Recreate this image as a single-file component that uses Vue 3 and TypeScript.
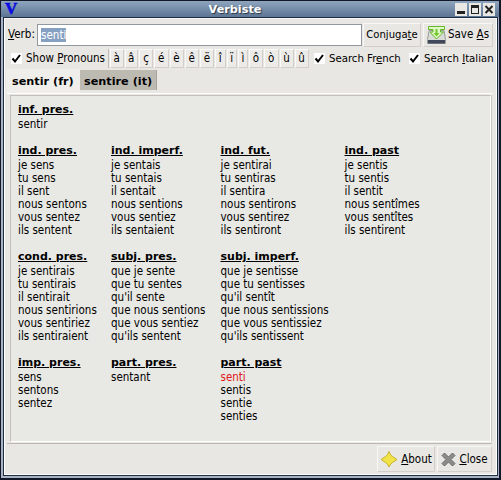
<script setup lang="ts">
interface Tense { name: string; forms: string[] }
interface Row { tenses: Tense[] }

const accents: { c: string; w: number }[] = [
  { c: 'à', w: 13.5 }, { c: 'â', w: 13.5 }, { c: 'ç', w: 14 }, { c: 'é', w: 14.5 }, { c: 'è', w: 14 },
  { c: 'ê', w: 14.5 }, { c: 'ë', w: 14 }, { c: 'î', w: 10.5 }, { c: 'ï', w: 10.5 }, { c: 'ì', w: 10 },
  { c: 'ô', w: 14 }, { c: 'ò', w: 14.5 }, { c: 'ù', w: 14 }, { c: 'û', w: 14 },
]

const rows: Row[] = [
  { tenses: [{ name: 'inf. pres.', forms: ['sentir'] }] },
  { tenses: [
    { name: 'ind. pres.', forms: ['je sens', 'tu sens', 'il sent', 'nous sentons', 'vous sentez', 'ils sentent'] },
    { name: 'ind. imperf.', forms: ['je sentais', 'tu sentais', 'il sentait', 'nous sentions', 'vous sentiez', 'ils sentaient'] },
    { name: 'ind. fut.', forms: ['je sentirai', 'tu sentiras', 'il sentira', 'nous sentirons', 'vous sentirez', 'ils sentiront'] },
    { name: 'ind. past', forms: ['je sentis', 'tu sentis', 'il sentit', 'nous sentîmes', 'vous sentîtes', 'ils sentirent'] },
  ] },
  { tenses: [
    { name: 'cond. pres.', forms: ['je sentirais', 'tu sentirais', 'il sentirait', 'nous sentirions', 'vous sentiriez', 'ils sentiraient'] },
    { name: 'subj. pres.', forms: ['que je sente', 'que tu sentes', "qu'il sente", 'que nous sentions', 'que vous sentiez', "qu'ils sentent"] },
    { name: 'subj. imperf.', forms: ['que je sentisse', 'que tu sentisses', "qu'il sentît", 'que nous sentissions', 'que vous sentissiez', "qu'ils sentissent"] },
  ] },
  { tenses: [
    { name: 'imp. pres.', forms: ['sens', 'sentons', 'sentez'] },
    { name: 'part. pres.', forms: ['sentant'] },
    { name: 'part. past', forms: ['senti', 'sentis', 'sentie', 'senties'] },
  ] },
]
const verb = 'senti'
</script>

<template>
  <div class="frame">
    <header class="title">
      <span class="logo">V</span>
      <span class="caption">Verbiste</span>
      <span class="wbtns">
        <svg width="12" height="13" viewBox="0 0 12 13"><path d="M0 0h12v13H0z" fill="#e9e8e4" /><path d="M2 8h8v3H2z" fill="#222" /></svg>
        <svg width="12" height="13" viewBox="0 0 12 13"><path d="M0 0h12v13H0z" fill="#e9e8e4" /><path d="M2 2h8v9H2zM3 5v5h6V5z" fill="#222" fill-rule="evenodd" /></svg>
        <svg width="12" height="13" viewBox="0 0 12 13"><path d="M0 0h12v13H0z" fill="#e9e8e4" /><path d="M2.500 3l7 7M9.500 3l-7 7" stroke="#222" stroke-width="2" /></svg>
      </span>
    </header>
    <div class="edge">
      <main class="body">
        <div class="bar">
          <label class="verb"><u>V</u>erb:</label>
          <div class="entry"><span class="sel">{{ verb }}</span></div>
          <button class="btn conj"><span>Conjuga<u>t</u>e</span></button>
          <button class="btn save">
            <svg width="19" height="20" viewBox="0 0 19 20">
              <path d="M2 5.500h15l1.500 9v4h-18v-4z" fill="#d8dad5" stroke="#999b96" />
              <path d="M1 15h17v3.500H1z" fill="#40495c" />
              <path d="M1.500 1.500h16v3h-4V7h3L9.500 14 3 7h3V4.500H1.500z" fill="#e2f8c8" stroke="#62ba28" />
              <path d="M8.500 4h2v4h2l-3 3.500-3-3.500h2z" fill="#73c82f" />
            </svg>
            <span>Save <u>A</u>s</span>
          </button>
        </div>
        <div class="opts">
          <label class="check pron"><svg width="11" height="11" viewBox="0 0 11 11"><path d="M1.500 5.500l2.500 3L9 2" fill="none" stroke="#000" stroke-width="2" /></svg><span>Show <u>P</u>ronouns</span></label>
          <div class="accents">
            <button v-for="a in accents" :key="a.c" class="acc" :style="{ width: a.w + 'px' }">{{ a.c }}</button>
          </div>
          <label class="check fr"><svg width="11" height="11" viewBox="0 0 11 11"><path d="M1.500 5.500l2.500 3L9 2" fill="none" stroke="#000" stroke-width="2" /></svg><span>Search Fr<u>e</u>nch</span></label>
          <label class="check it"><svg width="11" height="11" viewBox="0 0 11 11"><path d="M1.500 5.500l2.500 3L9 2" fill="none" stroke="#000" stroke-width="2" /></svg><span>Search <u>I</u>talian</span></label>
        </div>
        <nav class="tabs">
          <div class="tab on">sentir (fr)</div>
          <div class="tab off">sentire (it)</div>
        </nav>
        <div class="book">
          <section class="page">
            <div v-for="(r, i) in rows" :key="i" class="row">
              <div v-for="t in r.tenses" :key="t.name" class="tense">
                <h2>{{ t.name }}</h2>
                <p v-for="f in t.forms" :key="f" :class="{ hit: f === verb }">{{ f }}</p>
              </div>
            </div>
          </section>
        </div>
        <footer class="foot">
          <button class="btn about">
            <svg width="18" height="18" viewBox="0 0 18 18"><path d="M9 1.500Q10.500 5.500 12.500 6.500l4.500 3-4.500 3Q10.500 13.500 9 17 7.500 13.500 5.500 12.500L1 9.500l4.500-3Q7.500 5.500 9 1.500z" fill="#f1e247" stroke="#c5b32c" /></svg>
            <span><u>A</u>bout</span>
          </button>
          <button class="btn close">
            <svg width="15" height="15" viewBox="0 0 15 15"><path d="M3.500 1l4 4 4-4L14 3.500l-4 4 4 4-2.500 2.500-4-4-4 4L1 11.500l4-4-4-4z" fill="#8b8c8a" stroke="#6b6c6a" /></svg>
            <span><u>C</u>lose</span>
          </button>
        </footer>
      </main>
    </div>
  </div>
</template>

<style>
body { margin: 0; background: #141c30; overflow: hidden; }
</style>
<style scoped>
* { box-sizing: border-box; }
.frame { width: 501px; height: 480px; padding: 1px 2px 2px 1px; background: #10182a; font: 11.5px/13px "DejaVu Sans Condensed", "DejaVu Sans", sans-serif; font-stretch: condensed; color: #000; display: flex; flex-direction: column; }
.title { flex: none; height: 16px; display: grid; grid-template-columns: 44px 1fr 44px; align-items: center; background: linear-gradient(#8fa5be, #5c7593); }
.logo { font: bold 17px/16px "Liberation Serif", serif; color: #0a0ae0; padding-left: 4px; -webkit-text-stroke: .6px #0a0ae0; }
.caption { font: bold 11.25px/15px "DejaVu Sans", sans-serif; color: #fff; text-align: center; text-shadow: 1px 1px 1px #26364c; padding-right: 30px; }
.wbtns { display: flex; gap: 2px; }
.edge { flex: 1; min-height: 0; display: flex; padding: 0 1px 2px 2px; background: #a9b3c3; }
.body { flex: 1; display: flex; flex-direction: column; background: #e9e7e3; border: 1px solid #202c42; padding: 4px 3px 0 2px; min-height: 0; box-shadow: inset 1px 0 #fff, inset -1px 0 #fff, inset 0 1px #f5f5f3, inset 0 -1px #fff; }
.bar { flex: none; display: flex; height: 25px; align-items: center; }
.verb { width: 31px; padding-left: 2px; }
.entry { width: 325px; height: 22px; border: 1px solid #91989e; background: #fff; padding: 3px; line-height: 14px; }
.sel { display: inline-block; background: #86a0c2; color: #fff; font-size: 11.6px; }
.btn { font: inherit; color: #000; border: 1px solid #d2cfca; border-top-color: #f8f7f5; border-left-color: #f8f7f5; background: #e9e7e3; padding: 0; display: flex; align-items: center; justify-content: center; white-space: nowrap; }
.conj { width: 58px; height: 24px; margin-left: 1px; font-size: 11.2px; }
.save { width: 70px; height: 24px; margin-left: 2px; gap: 2px; }
.opts { flex: none; display: flex; height: 21px; align-items: center; margin-top: 1px; }
.check { flex: none; display: flex; align-items: center; gap: 4px; white-space: nowrap; }
.check svg { background: #fff; flex: none; }
.pron { width: 103px; padding-left: 5px; border-right: 1px solid #bdb9b3; height: 19px; }
.accents { flex: none; display: flex; gap: 1px; width: 205px; padding-left: 1px; }
.acc { flex: none; height: 19px; padding: 0; font: inherit; color: #000; border: 1px solid #d2cfca; border-top-color: #fafafa; border-left-color: #fafafa; background: #edebe8; }
.fr { width: 95px; }
.fr, .it { font-size: 11.3px; }
.tabs { flex: none; display: flex; height: 24px; align-items: flex-end; font: bold 11.25px/16px "DejaVu Sans", sans-serif; }
.tab { white-space: nowrap; }
.on { width: 74px; height: 24px; padding: 5px 0 0 6px; background: #efeeeb; }
.off { width: 77px; height: 20px; margin-bottom: 3px; padding: 4px 0 0 4px; background: #bdbab1; border-right: 1px solid #a8a49d; }
.book { flex: none; height: 351px; width: 485px; margin-left: 1px; border-top: 1px solid #fff; border-bottom: 1px solid #bdb9b2; padding: 1px; }
.page { height: 347px; padding: 6px 0 0 7px; margin-left: 2px; background: #e8e8e4; border: 1px solid #c4bfba; border-right-color: #fff; border-bottom-color: #fff; box-shadow: 1px 0 #cbc6c0; }
.row { display: grid; grid-template-columns: 93px 109.500px 124px 1fr; margin-bottom: 12px; }
.tense { white-space: nowrap; }
h2 { margin: 0; font: bold 11px/16px "DejaVu Sans", sans-serif; text-decoration: underline; }
p { margin: 0; height: 13px; }
.hit { color: #e01818; }
.foot { flex: none; display: flex; justify-content: flex-end; padding: 2px 2px 0 0; gap: 2px; }
.foot .btn { height: 26px; gap: 3px; }
.about { width: 58px; }
.close { width: 55px; }
</style>
